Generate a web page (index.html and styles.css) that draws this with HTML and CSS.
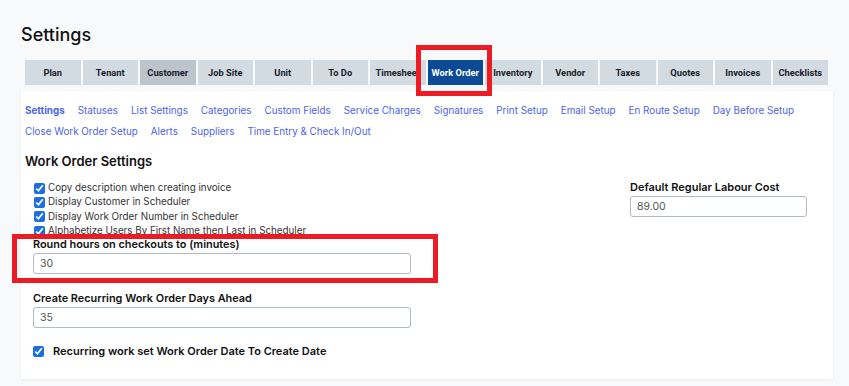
FILE: index.html
```html
<!DOCTYPE html>
<html>
<head>
    <title>Settings - Work Order</title>
    <link rel="stylesheet" href="styles.css">
</head>
<body>
    <div class="page">
        <h1 class="page-title">Settings</h1>

        <!-- Top level settings tabs -->
        <div class="tabs">
            <div class="tab">Plan</div>
            <div class="tab">Tenant</div>
            <div class="tab tab-muted">Customer</div>
            <div class="tab">Job Site</div>
            <div class="tab">Unit</div>
            <div class="tab">To Do</div>
            <div class="tab">Timesheet</div>
            <div class="tab tab-active">Work Order</div>
            <div class="tab">Inventory</div>
            <div class="tab">Vendor</div>
            <div class="tab">Taxes</div>
            <div class="tab">Quotes</div>
            <div class="tab">Invoices</div>
            <div class="tab">Checklists</div>
        </div>

        <div class="card">
            <!-- Work order sub navigation -->
            <div class="subnav">
                <a class="subnav-link current">Settings</a>
                <a class="subnav-link">Statuses</a>
                <a class="subnav-link">List Settings</a>
                <a class="subnav-link">Categories</a>
                <a class="subnav-link">Custom Fields</a>
                <a class="subnav-link">Service Charges</a>
                <a class="subnav-link">Signatures</a>
                <a class="subnav-link">Print Setup</a>
                <a class="subnav-link">Email Setup</a>
                <a class="subnav-link">En Route Setup</a>
                <a class="subnav-link">Day Before Setup</a>
                <a class="subnav-link">Close Work Order Setup</a>
                <a class="subnav-link">Alerts</a>
                <a class="subnav-link">Suppliers</a>
                <a class="subnav-link">Time Entry &amp; Check In/Out</a>
            </div>

            <h2 class="section-title">Work Order Settings</h2>

            <div class="form-grid">
                <div class="col-left">
                    <label class="check-row"><input type="checkbox" checked> Copy description when creating invoice</label>
                    <label class="check-row"><input type="checkbox" checked> Display Customer in Scheduler</label>
                    <label class="check-row"><input type="checkbox" checked> Display Work Order Number in Scheduler</label>
                    <label class="check-row"><input type="checkbox" checked> Alphabetize Users By First Name then Last in Scheduler</label>

                    <div class="field field-round">
                        <label class="field-label">Round hours on checkouts to (minutes)</label>
                        <input class="text-input" type="text" value="30">
                    </div>

                    <div class="field field-recurring">
                        <label class="field-label">Create Recurring Work Order Days Ahead</label>
                        <input class="text-input" type="text" value="35">
                    </div>

                    <label class="check-row check-strong"><input type="checkbox" checked> Recurring work set Work Order Date To Create Date</label>
                </div>

                <div class="col-right">
                    <div class="field">
                        <label class="field-label">Default Regular Labour Cost</label>
                        <input class="text-input" type="text" value="89.00">
                    </div>
                </div>
            </div>
        </div>

        <!-- annotation boxes -->
        <div class="mark mark-tab"></div>
        <div class="mark mark-field"></div>
    </div>
</body>
</html>
```

FILE: styles.css
```css
body {
    margin: 0;
    background: #f8f9fb;
    font-family: Inter, "Noto Sans", sans-serif;
    color: #222;
}

.page {
    position: relative;
    padding: 24px 20px 8px 21px;
}

.page-title {
    margin: 0 0 14px 0;
    font-size: 18px;
    font-weight: 500;
    line-height: 22px;
    color: #111;
}

.tabs {
    display: flex;
    gap: 2px;
    width: 803px;
    margin-left: 4px;
}

.tab {
    flex: 1;
    height: 25px;
    line-height: 25px;
    text-align: center;
    background: #d3dbe2;
    font-family: Roboto, sans-serif;
    font-weight: 700;
    font-size: 9.3px;
    color: #161c28;
    white-space: nowrap;
    overflow: hidden;
}

.tab-muted {
    background: #bcc4cc;
}

.tab-active {
    background: #0b4a96;
    color: #fff;
}

.card {
    width: 804px;
    margin-top: 6px;
    background: #fff;
    padding: 11px 4px 21px 4px;
    box-shadow: 0 1px 3px rgba(0,0,0,0.06);
}

.subnav {
    display: flex;
    flex-wrap: wrap;
    column-gap: 13px;
    row-gap: 4px;
}

.subnav-link {
    font-size: 9.85px;
    line-height: 17px;
    color: #4d64ee;
    cursor: pointer;
}

.subnav-link.current {
    font-weight: 700;
}

.section-title {
    margin: 13px 0 12px 0;
    font-size: 13px;
    font-weight: 600;
    line-height: 16px;
    color: #111;
}

.form-grid {
    display: grid;
    grid-template-columns: 597px 177px;
    padding-left: 8px;
}

.col-left {
    display: flex;
    flex-direction: column;
}

.check-row {
    display: flex;
    align-items: center;
    gap: 3px;
    font-size: 9.8px;
    line-height: 14.3px;
    height: 14.3px;
    color: #333;
    white-space: nowrap;
}

.check-row input {
    width: 11px;
    height: 11px;
    margin: 0 0 0 1px;
    accent-color: #1c6fe3;
}

.field {
    display: flex;
    flex-direction: column;
}

.field-label {
    font-size: 10.9px;
    font-weight: 600;
    line-height: 12px;
    color: #111;
    margin-bottom: 3px;
}

.col-right .field-label {
    font-size: 11px;
}

.text-input {
    width: 378px;
    height: 21px;
    box-sizing: border-box;
    border: 1px solid #b0bcc5;
    border-radius: 3px;
    padding: 0 6px;
    font-family: inherit;
    font-size: 10.5px;
    color: #555;
}

.col-right .text-input {
    width: 177px;
}

.field-round {
    margin-top: 0;
}

.field-recurring {
    margin-top: 18px;
}

.check-strong {
    margin-top: 16px;
    gap: 9px;
    font-size: 11px;
    font-weight: 600;
    color: #111;
}

.check-strong input {
    margin-left: 0;
}

/* red annotation boxes drawn over the screenshot */
.mark {
    position: absolute;
    border: 5px solid #ed1c24;
    box-sizing: border-box;
}

.mark-tab {
    left: 416px;
    top: 45px;
    width: 76px;
    height: 51px;
}

.mark-field {
    left: 12px;
    top: 234px;
    width: 426px;
    height: 49px;
}
```
